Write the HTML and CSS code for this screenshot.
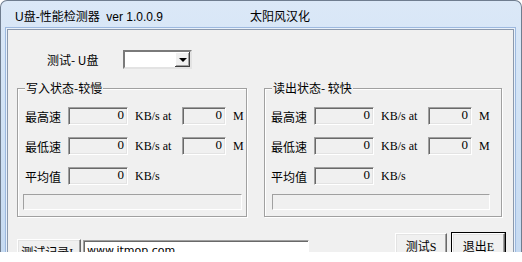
FILE: index.html
```html
<!DOCTYPE html>
<html lang="zh-CN">
<head>
    <meta charset="UTF-8">
    <title>U盘-性能检测器</title>
    <link rel="stylesheet" href="styles.css">
</head>
<body>
    <div class="window">
        <div class="titlebar">
            <span class="title-main">U盘-性能检测器&nbsp; ver 1.0.0.9</span>
            <span class="credit">太阳风汉化</span>
        </div>
        <div class="client">
            <div class="drive-row">
                <span class="drive-label">测试- U盘</span>
                <div class="combo"><span class="combo-btn"></span></div>
            </div>

            <div class="groups">
                <div class="group group-write">
                    <span class="group-title">写入状态-较慢</span>
                    <div class="stats">
                        <span class="cap">最高速</span><span class="field">0</span><span class="unit">KB/s at</span><span class="field">0</span><span class="unit">M</span>
                        <span class="cap">最低速</span><span class="field">0</span><span class="unit">KB/s at</span><span class="field">0</span><span class="unit">M</span>
                        <span class="cap">平均值</span><span class="field">0</span><span class="unit">KB/s</span>
                    </div>
                    <div class="progress"></div>
                </div>
                <div class="group group-read">
                    <span class="group-title">读出状态- 较快</span>
                    <div class="stats">
                        <span class="cap">最高速</span><span class="field">0</span><span class="unit">KB/s at</span><span class="field">0</span><span class="unit">M</span>
                        <span class="cap">最低速</span><span class="field">0</span><span class="unit">KB/s at</span><span class="field">0</span><span class="unit">M</span>
                        <span class="cap">平均值</span><span class="field">0</span><span class="unit">KB/s</span>
                    </div>
                    <div class="progress"></div>
                </div>
            </div>

            <div class="bottom-row">
                <button class="btn btn-log">测试记录L</button>
                <div class="url-box">www.itmop.com</div>
                <button class="btn btn-test">测试S</button>
                <button class="btn btn-exit">退出E</button>
            </div>
        </div>
    </div>
</body>
</html>
```

FILE: styles.css
```css
body {
    margin: 0;
    width: 522px;
    height: 262px;
    overflow: hidden;
    background: #fff;
}
.window {
    width: 520px;
    height: 251px;
    overflow: hidden;
    border: 1px solid #6f7d8f;
    border-bottom: none;
    border-radius: 7px 7px 0 0;
    background: linear-gradient(to bottom, #dbe8f7 0%, #d2e3f5 40%, #c6daf1 100%);
}
.titlebar {
    display: flex;
    align-items: center;
    height: 28px;
    padding-left: 14px;
    font-family: "Liberation Sans", "Noto Sans CJK SC", sans-serif;
    font-size: 12px;
    color: #000;
}
.title-main {
    width: 235px;
}
.client {
    margin-left: 6px;
    width: 505px;
    height: 260px;
    border: 1px solid #8b99ad;
    background: #f0f0f0;
    box-shadow: 0 0 0 1px #e9f1fa, 0 0 0 2px #9db9df;
    font-family: "Liberation Serif", "Noto Sans CJK SC", serif;
    font-size: 12px;
    color: #000;
}
.drive-row {
    display: flex;
    align-items: center;
    padding-top: 20px;
    font-family: "Noto Sans CJK SC", sans-serif;
}
.drive-label {
    margin-left: 39px;
    width: 76px;
}
.combo {
    position: relative;
    width: 65px;
    height: 15px;
    background: #fff;
    border-top: 2px solid #7a7a7a;
    border-left: 2px solid #7a7a7a;
    border-right: 2px solid #e3e3e3;
    border-bottom: 2px solid #e3e3e3;
}
.combo-btn {
    position: absolute;
    right: 0;
    top: 0;
    width: 15px;
    height: 15px;
    background: #f0f0f0;
    box-shadow: inset -1px -1px 0 #404040, inset 1px 1px 0 #fff, inset -2px -2px 0 #a0a0a0;
}
.combo-btn::after {
    content: "";
    position: absolute;
    left: 4px;
    top: 6px;
    border-left: 4px solid transparent;
    border-right: 4px solid transparent;
    border-top: 4px solid #000;
}
.groups {
    display: flex;
    margin-top: 19px;
}
.group {
    position: relative;
    border: 1px solid #a0a0a0;
    box-shadow: 1px 1px 0 #fff, inset 1px 1px 0 #fff;
    padding: 17px 0 6px 7px;
}
.group-write {
    margin-left: 9px;
    width: 221px;
}
.group-read {
    margin-left: 17px;
    width: 230px;
    padding-left: 6px;
}
.group-title {
    position: absolute;
    top: -8px;
    left: 7px;
    padding: 0 1px;
    background: #f0f0f0;
    font-family: "Noto Sans CJK SC", sans-serif;
    line-height: 14px;
}
.stats {
    display: grid;
    grid-template-columns: 43px 60px 54px 44px auto;
    grid-auto-rows: 20px;
    row-gap: 10px;
    align-items: center;
}
.cap {
    font-family: "Noto Sans CJK SC", sans-serif;
}
.field {
    height: 16px;
    padding-right: 3px;
    text-align: right;
    font-size: 13px;
    line-height: 14px;
    background: #f0f0f0;
    border-top: 1px solid #a0a0a0;
    border-left: 1px solid #a0a0a0;
    border-right: 1px solid #fff;
    border-bottom: 1px solid #fff;
    box-shadow: inset 1px 1px 0 #696969, inset -1px -1px 0 #e3e3e3;
}
.unit {
    padding-left: 7px;
}
.progress {
    margin: 8px 0 0 -2px;
    width: 217px;
    height: 14px;
    border-top: 1px solid #a0a0a0;
    border-left: 1px solid #a0a0a0;
    border-right: 1px solid #fff;
    border-bottom: 1px solid #fff;
}
.group-read .progress {
    margin-left: 1px;
    width: 216px;
}
.bottom-row {
    display: flex;
    align-items: flex-start;
    margin-top: 16px;
}
.btn {
    height: 25px;
    padding: 0;
    background: #f0f0f0;
    border-top: 1px solid #fff;
    border-left: 1px solid #fff;
    border-right: 1px solid #696969;
    border-bottom: 1px solid #696969;
    box-shadow: inset -1px -1px 0 #a0a0a0, inset 1px 1px 0 #e3e3e3;
    font-family: "Liberation Serif", "Noto Sans CJK SC", serif;
    font-size: 12px;
    color: #000;
}
.btn-log {
    margin: 6px 0 0 9px;
    width: 64px;
}
.url-box {
    margin: 7px 0 0 2px;
    width: 221px;
    height: 20px;
    padding-left: 3px;
    background: #fff;
    border-top: 1px solid #a0a0a0;
    border-left: 1px solid #a0a0a0;
    border-right: 1px solid #fff;
    border-bottom: 1px solid #fff;
    box-shadow: inset 1px 1px 0 #696969;
    font-family: "DejaVu Sans", "Liberation Sans", sans-serif;
    font-size: 11px;
    line-height: 20px;
}
.btn-test {
    margin-left: 86px;
    width: 52px;
}
.btn-exit {
    margin-left: 5px;
    width: 53px;
    outline: 1px solid #000;
    outline-offset: 0;
}
```
